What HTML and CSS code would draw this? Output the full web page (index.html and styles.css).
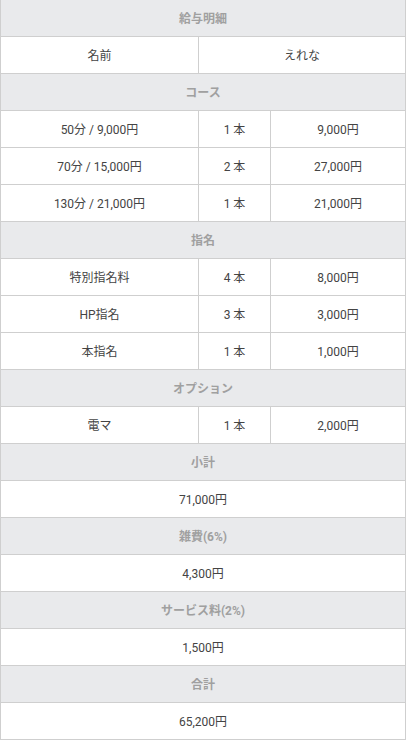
FILE: index.html
```html
<!DOCTYPE html>
<html lang="ja">
<head>
    <meta charset="UTF-8">
    <meta name="viewport" content="width=device-width, initial-scale=1.0">
    <title>給与明細</title>
    <link rel="stylesheet" href="styles.css">
</head>
<body>
    <table class="salary-table">
        <colgroup>
            <col class="col-name">
            <col class="col-count">
            <col class="col-price">
        </colgroup>
        <tr class="first-row">
            <th colspan="3">給与明細</th>
        </tr>
        <tr>
            <td>名前</td>
            <td colspan="2">えれな</td>
        </tr>

        <!-- コース -->
        <tr>
            <th colspan="3">コース</th>
        </tr>
        <tr>
            <td>50分 / 9,000円</td>
            <td>1 本</td>
            <td>9,000円</td>
        </tr>
        <tr>
            <td>70分 / 15,000円</td>
            <td>2 本</td>
            <td>27,000円</td>
        </tr>
        <tr>
            <td>130分 / 21,000円</td>
            <td>1 本</td>
            <td>21,000円</td>
        </tr>

        <!-- 指名 -->
        <tr>
            <th colspan="3">指名</th>
        </tr>
        <tr>
            <td>特別指名料</td>
            <td>4 本</td>
            <td>8,000円</td>
        </tr>
        <tr>
            <td>HP指名</td>
            <td>3 本</td>
            <td>3,000円</td>
        </tr>
        <tr>
            <td>本指名</td>
            <td>1 本</td>
            <td>1,000円</td>
        </tr>

        <!-- オプション -->
        <tr>
            <th colspan="3">オプション</th>
        </tr>
        <tr>
            <td>電マ</td>
            <td>1 本</td>
            <td>2,000円</td>
        </tr>

        <!-- 合計 -->
        <tr>
            <th colspan="3">小計</th>
        </tr>
        <tr>
            <td colspan="3">71,000円</td>
        </tr>
        <tr>
            <th colspan="3">雑費(6%)</th>
        </tr>
        <tr>
            <td colspan="3">4,300円</td>
        </tr>
        <tr>
            <th colspan="3">サービス料(2%)</th>
        </tr>
        <tr>
            <td colspan="3">1,500円</td>
        </tr>
        <tr>
            <th colspan="3">合計</th>
        </tr>
        <tr>
            <td colspan="3">65,200円</td>
        </tr>
    </table>
</body>
</html>
```

FILE: styles.css
```css
body {
    margin: 0;
    background: #fff;
    font-family: Roboto, "Noto Sans CJK JP", sans-serif;
}

.salary-table {
    width: 406px;
    border-collapse: collapse;
    table-layout: fixed;
    font-size: 12px;
}

.col-name {
    width: 198px;
}

.col-count {
    width: 72px;
}

.salary-table th,
.salary-table td {
    height: 37px;
    padding: 0;
    border: 1px solid #cfcfcf;
    text-align: center;
    vertical-align: middle;
    box-sizing: border-box;
}

.salary-table th {
    background: #e9eaec;
    color: #a0a0a0;
    font-weight: 700;
}

.salary-table td {
    background: #fff;
    color: #444;
    font-weight: 400;
}

.salary-table .first-row th {
    height: 36px;
    border-top: none;
}
```
